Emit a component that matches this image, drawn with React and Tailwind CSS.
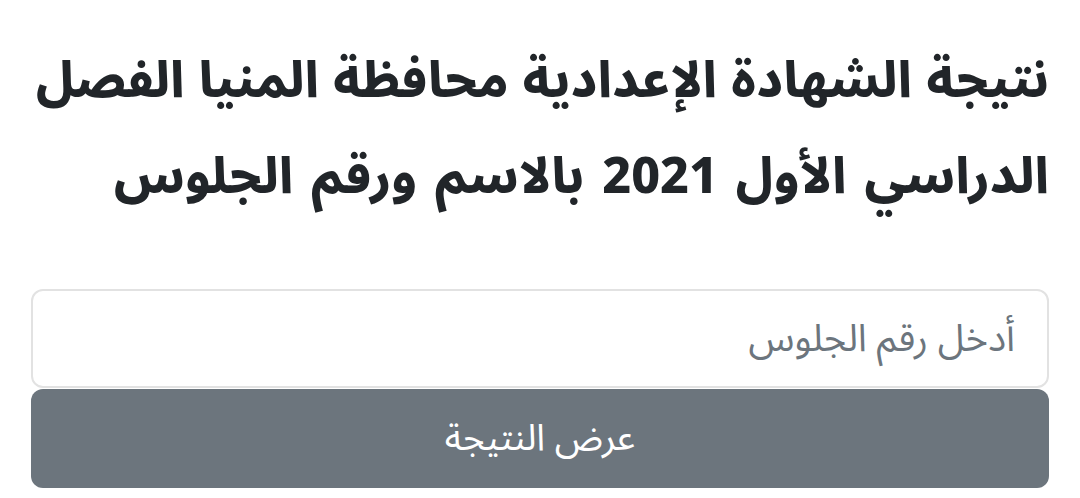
export default function App() {
  return (
    <div dir="rtl" className="w-[1080px] h-[498px] bg-white overflow-hidden" style={{ fontFamily: '"Noto Sans Arabic", "Noto Sans Arabic UI", "Noto Naskh Arabic", "DejaVu Sans", sans-serif' }}>
      <div className="px-[31px] pt-[33px]">
        <h1 className="text-[50px] leading-[96px] font-extrabold text-[#212529] m-0 whitespace-nowrap">
          <span className="block [word-spacing:1px]">نتيجة الشهادة الإعدادية محافظة المنيا الفصل</span>
          <span className="block [word-spacing:5px]">الدراسي الأول 2021 بالاسم ورقم الجلوس</span>
        </h1>
        <div className="mt-[64px] flex flex-col">
          <input
            type="text"
            placeholder="أدخل رقم الجلوس"
            className="h-[99px] w-full rounded-[12px] border-2 border-[#e2e2e2] bg-white px-[32px] text-[38px] text-[#212529] placeholder:text-[#6c757d] outline-none"
          />
          <button className="mt-[1px] h-[99px] w-full rounded-[12px] bg-[#6c757d] text-[37px] text-white">
            عرض النتيجة
          </button>
        </div>
      </div>
    </div>
  );
}
